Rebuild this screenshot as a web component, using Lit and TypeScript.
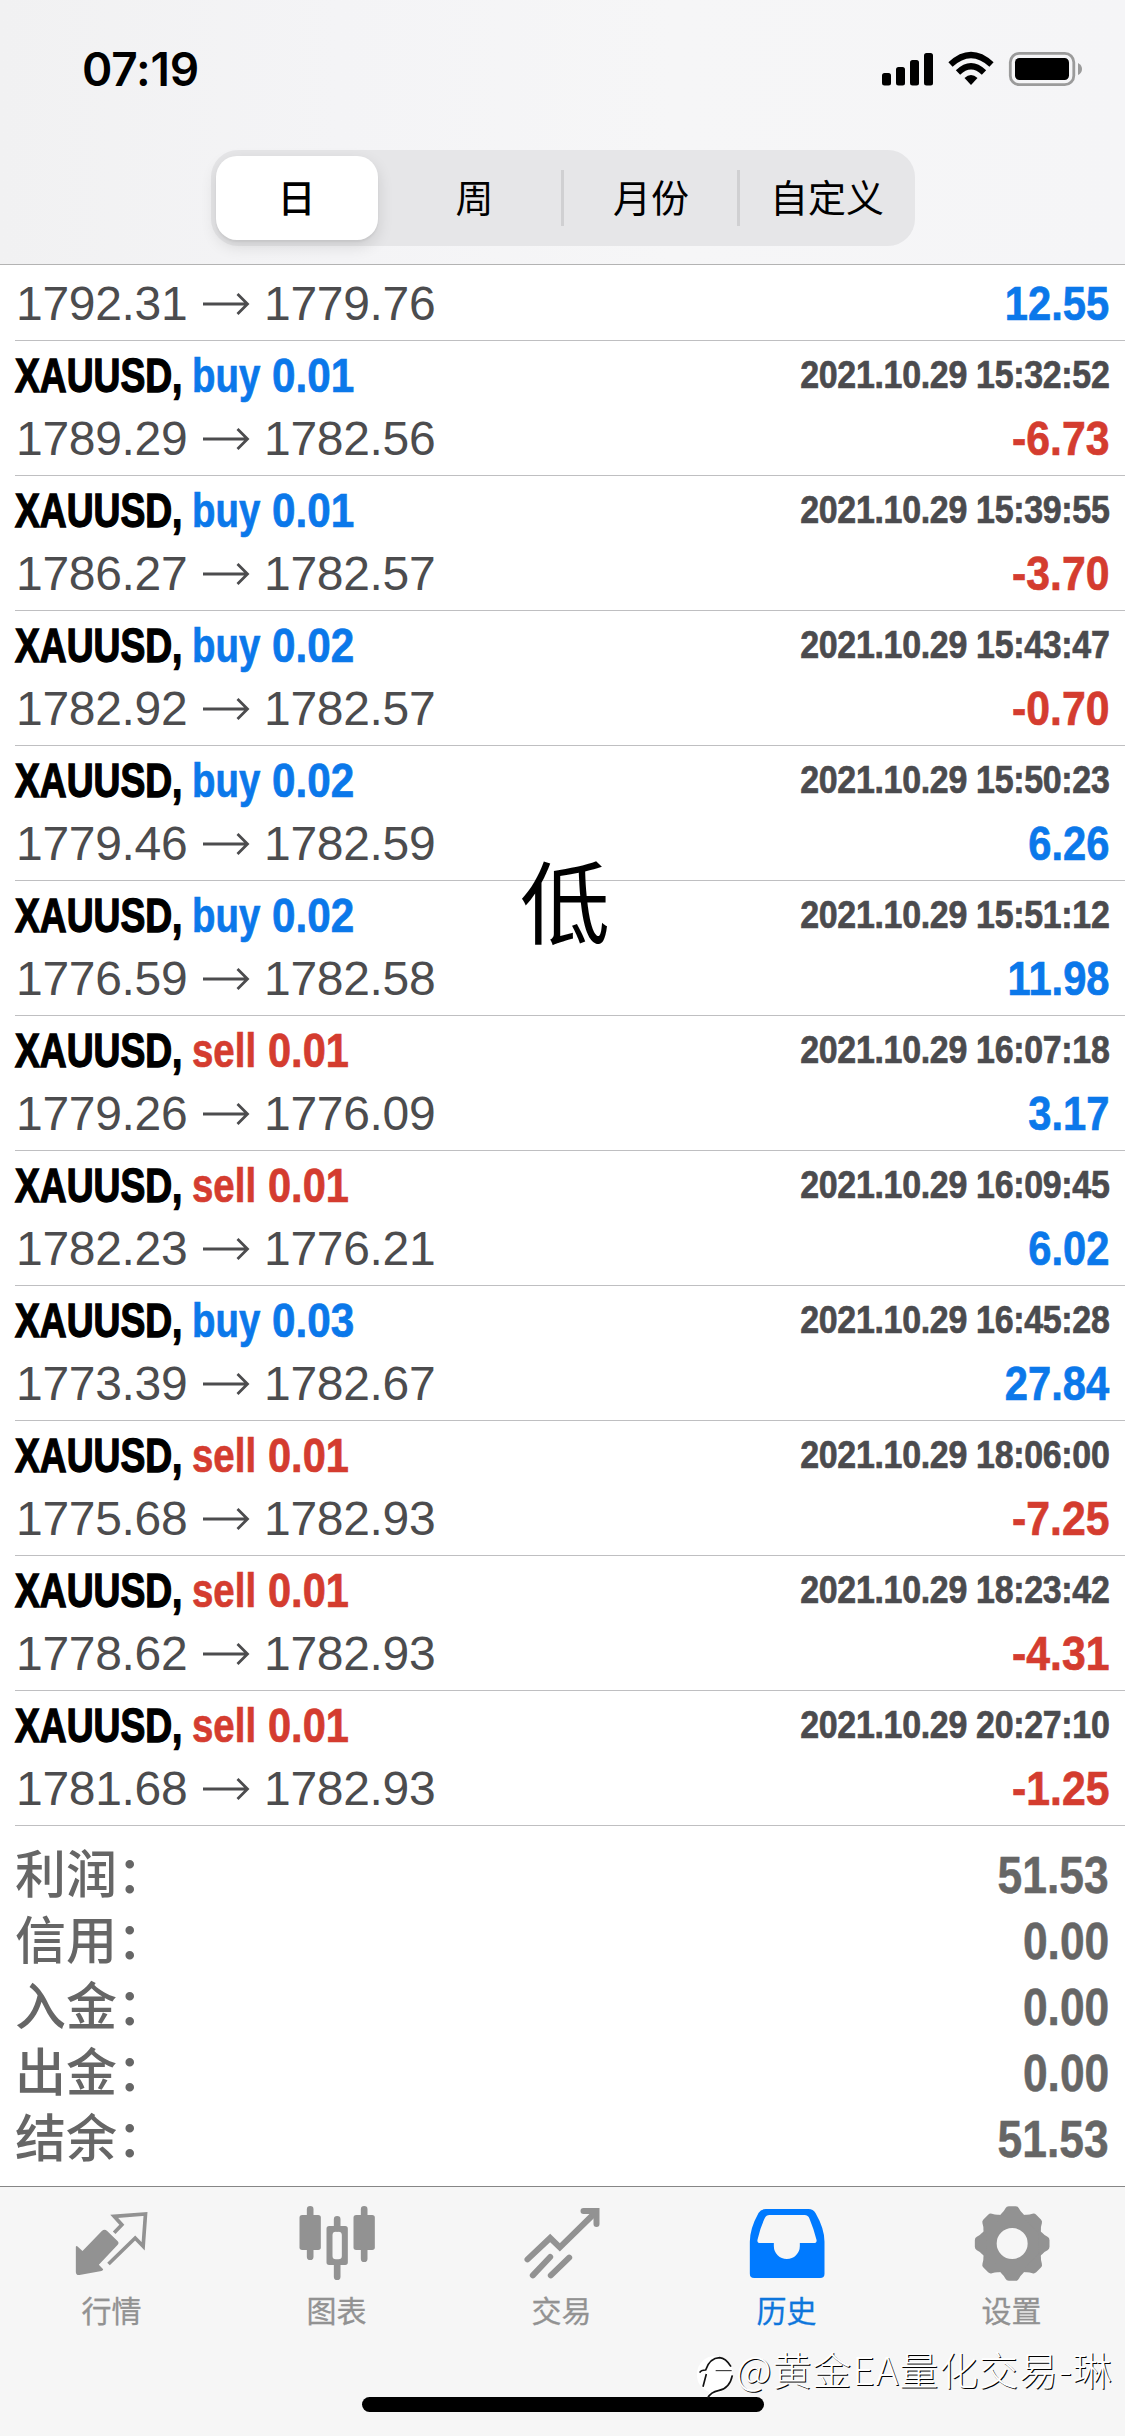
import { LitElement, html, css, svg } from "lit";
import { customElement, property } from "lit/decorators.js";
import { classMap } from "lit/directives/class-map.js";

interface Deal {
  side: "buy" | "sell";
  volume: string;
  open: string;
  close: string;
  time: string;
  profit: string;
}

const deals: Deal[] = [
  ["buy", "0.01", "1789.29", "1782.56", "15:32:52", "-6.73"],
  ["buy", "0.01", "1786.27", "1782.57", "15:39:55", "-3.70"],
  ["buy", "0.02", "1782.92", "1782.57", "15:43:47", "-0.70"],
  ["buy", "0.02", "1779.46", "1782.59", "15:50:23", "6.26"],
  ["buy", "0.02", "1776.59", "1782.58", "15:51:12", "11.98"],
  ["sell", "0.01", "1779.26", "1776.09", "16:07:18", "3.17"],
  ["sell", "0.01", "1782.23", "1776.21", "16:09:45", "6.02"],
  ["buy", "0.03", "1773.39", "1782.67", "16:45:28", "27.84"],
  ["sell", "0.01", "1775.68", "1782.93", "18:06:00", "-7.25"],
  ["sell", "0.01", "1778.62", "1782.93", "18:23:42", "-4.31"],
  ["sell", "0.01", "1781.68", "1782.93", "20:27:10", "-1.25"],
].map(([side, volume, open, close, time, profit]) => ({
  side: side as Deal["side"], volume, open, close, time: `2021.10.29 ${time}`, profit,
}));

const totals = [
  ["利润", "51.53"],
  ["信用", "0.00"],
  ["入金", "0.00"],
  ["出金", "0.00"],
  ["结余", "51.53"],
];

const tooth = "M-42-78L-32-90Q-25-96-20-106Q-17-112-10-112H10Q17-112 20-106Q25-96 32-90L42-78Z";

const tabs = [
  {
    label: "行情",
    icon: svg`<svg viewBox="223.5 75 228 228">
      <path fill="currentColor" d="M304 153Q312 146 320 153L351 183Q357 189 351 195L295 254L308 268Q308 271 303 273L237 285Q226 286 226 275V200Q228 196 232 200L246 213Z"/>
      <path fill="none" stroke="currentColor" stroke-width="11" d="M341 158L364 134L341 109L435 102L428 199L404 174L324 252"/></svg>`,
  },
  {
    label: "图表",
    icon: svg`<svg viewBox="898.5 75 228 228">
      <g fill="none" stroke="currentColor" stroke-width="20" stroke-linecap="round">
        <path d="M929 88V230M1091 88V236M1010 118V145M1010 250V290"/></g>
      <g fill="currentColor"><rect x="897" y="105" width="64" height="105" rx="8"/><rect x="1059" y="105" width="64" height="105" rx="8"/></g>
      <path fill="currentColor" fill-rule="evenodd" d="M986 138H1034Q1042 138 1042 146V247Q1042 255 1034 255H986Q978 255 978 247V146Q978 138 986 138ZM1006 155Q996 155 996 165V228Q996 238 1006 238H1014Q1024 238 1024 228V165Q1024 155 1014 155Z"/></svg>`,
  },
  {
    label: "交易",
    icon: svg`<svg viewBox="223.5 75 228 228">
      <g fill="none" stroke="currentColor" stroke-width="18" stroke-linecap="round">
        <path d="M231 238L299 174L328 202L430 102"/><path stroke-linecap="butt" d="M436 96L424 108"/>
        <path d="M399 93H438V132"/><path d="M247 286L299 231M301 286L356 233"/></g></svg>`,
  },
  {
    label: "历史",
    icon: svg`<svg viewBox="898.5 75 228 228">
      <path fill="currentColor" fill-rule="evenodd" d="M946 87H1074Q1088 87 1095 99Q1122 146 1122 185V281Q1122 294 1109 294H911Q898 294 898 281V185Q898 146 924 99Q931 87 946 87ZM957 105Q947 105 943 114Q930 141 921 179Q919 189 929 189H970V198A39 39 0 0 0 1048 198V189H1090Q1100 189 1098 179Q1090 147 1077 116Q1073 105 1062 105Z"/></svg>`,
  },
  {
    label: "设置",
    icon: svg`<svg viewBox="898.5 75 228 228">
      <g transform="translate(1010 190.500)" fill="currentColor">
        <circle r="69" fill="none" stroke="currentColor" stroke-width="45"/>
        ${[0, 45, 90, 135, 180, 225, 270, 315].map((a) => svg`<path transform="rotate(${a})" d=${tooth}/>`)}
      </g></svg>`,
  },
];

@customElement("status-bar")
class StatusBar extends LitElement {
  static styles = css`
    :host { display: flex; justify-content: space-between; align-items: center; height: 138px; padding: 0 41px 0 82px; box-sizing: border-box; }
    .time { font: 600 46px/60px Inter, sans-serif; color: #000; letter-spacing: -0.2px; }
    .status { display: block; width: 204px; height: 36px; }
  `;
  render() {
    return html`<span class="time">07:19</span>
      <svg class="status" viewBox="880 51 204 36">
        <g fill="#000">
          <rect x="882" y="73" width="9" height="12.500" rx="2.500"/><rect x="896" y="67" width="9" height="18.500" rx="2.500"/>
          <rect x="910" y="60" width="9" height="25.500" rx="2.500"/><rect x="924" y="53" width="9" height="32.500" rx="2.500"/>
          <path d="M971 85L964.500 78Q971 72 977.500 78Z"/>
        </g>
        <g fill="none" stroke="#000" stroke-width="6.200">
          <path d="M950.500 64.500Q971 45.500 991.500 64.500"/><path d="M958 72.500Q971 60 984 72.500"/>
        </g>
        <rect x="1010.300" y="53.300" width="63.500" height="31.400" rx="9" fill="none" stroke="#9b9b9b" stroke-width="2.800"/>
        <rect x="1015" y="58" width="54" height="22" rx="4.500" fill="#000"/>
        <path d="M1078 63Q1082 65 1082 69Q1082 73 1078 75Z" fill="#9b9b9b"/>
      </svg>`;
  }
}

@customElement("period-picker")
class PeriodPicker extends LitElement {
  static styles = css`
    :host { display: grid; grid-template-columns: repeat(4, 1fr); width: 704px; height: 96px; margin: 12px auto 0; border-radius: 27px; background: #e6e6e8; }
    .segment { display: flex; align-items: center; justify-content: center; padding-bottom: 4px; font: 400 38px/56px "Noto Sans CJK SC", sans-serif; color: #000; }
    .segment.divided { border-left: 3px solid #d0d0d2; height: 52px; align-self: center; margin-left: -2px; }
    .segment.active { margin: 6px 9px 6px 5px; background: #fff; border-radius: 21px; font-weight: 500; box-shadow: 0 6px 16px rgba(0, 0, 0, 0.12), 0 2px 2px rgba(0, 0, 0, 0.05); }
  `;
  render() {
    return ["日", "周", "月份", "自定义"].map(
      (t, i) => html`<span class=${classMap({ segment: true, active: i === 0, divided: i > 1 })}>${t}</span>`);
  }
}

@customElement("deal-row")
class DealRow extends LitElement {
  @property({ attribute: false }) deal!: Deal;
  @property({ type: Boolean }) partial = false;
  static styles = css`
    :host { display: block; margin-left: 15px; padding: 3px 16px 5px 0; border-bottom: 1px solid #bfbfc1; box-sizing: content-box; height: 126px; font: 400 48px/63px "Liberation Sans", Arial, sans-serif; }
    :host([partial]) { height: 63px; padding-top: 7px; }
    .line { display: flex; height: 63px; white-space: nowrap; }
    .head, .profit { font-weight: 700; -webkit-text-stroke: 0.7px currentColor; }
    .symbol, .side, .volume { transform-origin: 0 50%; min-width: 0; }
    .symbol { flex: 0 0 177px; color: #000; transform: scaleX(0.775); -webkit-text-stroke-width: 1.4px; }
    .side { transform: scaleX(0.8); }
    .side.buy { flex: 0 0 80px; }
    .side.sell { flex: 0 0 76px; }
    .volume { flex: 0 0 90px; transform: scaleX(0.88); }
    .volume.sell { transform: scaleX(0.865); }
    .buy, .gain { color: #0b78ea; }
    .sell, .loss { color: #d43c2f; }
    .time { margin-left: auto; font-size: 39px; line-height: 62px; color: #4b4b4e; transform: scaleX(0.87); transform-origin: 100% 50%; letter-spacing: -0.35px; }
    .prices { color: #4c4c4e; }
    .price { flex: 0 0 186px; min-width: 0; letter-spacing: -0.3px; }
    .price:first-child { padding-left: 1px; }
    .arrow { width: 48px; height: 24px; margin: 20px 14px 0 0; flex: none; }
    .profit { margin-left: auto; transform: scaleX(0.868); transform-origin: 100% 50%; }
    .profit.loss { transform: scaleX(0.89); }
  `;
  render() {
    const d = this.deal;
    return html`
      ${this.partial ? null : html`<div class="line head">
        <span class="symbol">XAUUSD,</span><span class="side ${d.side}">${d.side}</span>
        <span class="volume ${d.side}">${d.volume}</span><span class="time">${d.time}</span>
      </div>`}
      <div class="line prices">
        <span class="price">${d.open}</span>
        <svg class="arrow" viewBox="0 0 48 24" fill="none" stroke="currentColor" stroke-width="2.800"><path d="M1 12H45M35.500 2L45.500 12L35.500 22"/></svg>
        <span class="price">${d.close}</span>
        <span class="profit ${d.profit.startsWith("-") ? "loss" : "gain"}">${d.profit}</span>
      </div>`;
  }
}

@customElement("tab-bar")
class TabBar extends LitElement {
  static styles = css`
    :host { display: grid; grid-template-columns: repeat(5, 1fr); height: 250px; box-sizing: border-box; border-top: 1px solid #868686; background: #f6f6f6; padding-top: 18px; }
    .tab { display: flex; flex-direction: column; align-items: center; color: #929292; font: 400 30px/40px "Noto Sans CJK SC", sans-serif; }
    .tab.active { color: #007aff; }
    .tab svg { width: 76px; height: 76px; display: block; overflow: visible; }
    .label { margin-top: 8px; padding-right: 2px; -webkit-text-stroke: 0.3px currentColor; }
    .active .label { color: #0e76dc; }
  `;
  render() {
    return tabs.map((t, i) => html`<div class=${classMap({ tab: true, active: i === 3 })}>${t.icon}<span class="label">${t.label}</span></div>`);
  }
}

@customElement("app-root")
class AppRoot extends LitElement {
  static styles = css`
    :host { display: flex; flex-direction: column; position: relative; width: 1125px; height: 2436px; overflow: hidden; background: #fff; }
    .header { height: 264px; flex: none; border-bottom: 1px solid #b3b3b3; background: linear-gradient(90deg, #f1f1f2 0%, #f4f4f6 30%, #f6f6f7 60%, #f5f5f7 100%); }
    .totals { flex: 1; padding: 17px 16px 0 15px; }
    .total { display: flex; justify-content: space-between; height: 66px; color: #666; font: 500 51px/66px "Liberation Sans", "Noto Sans CJK SC", sans-serif; }
    .amount { font-weight: 700; transform: scaleX(0.87); transform-origin: 100% 50%; -webkit-text-stroke: 0.5px currentColor; }
    .note { position: absolute; left: 520px; top: 833px; font: 400 90px/130px "Noto Sans CJK SC", sans-serif; color: #000; }
    .home { position: absolute; left: 362px; top: 2397px; width: 402px; height: 15px; border-radius: 8px; background: #000; }
    .watermark { position: absolute; left: 694px; top: 2344px; display: flex; white-space: nowrap; font: 300 39px/48px "Noto Sans CJK SC", sans-serif; letter-spacing: 0.9px; color: #fff; text-shadow: 1px 1px 0 #000; }
    .logo { width: 42px; height: 56px; }
  `;
  render() {
    return html`
      <div class="header"><status-bar></status-bar><period-picker></period-picker></div>
      <deal-row partial .deal=${{ side: "sell", volume: "", open: "1792.31", close: "1779.76", time: "", profit: "12.55" }}></deal-row>
      ${deals.map((d) => html`<deal-row .deal=${d}></deal-row>`)}
      <div class="totals">
        ${totals.map(([k, v]) => html`<div class="total"><span>${k}：</span><span class="amount">${v}</span></div>`)}
      </div>
      <tab-bar></tab-bar>
      <div class="note">低</div>
      <div class="home"></div>
      <div class="watermark">
        <svg class="logo" viewBox="57 492 126 168">
          <path fill="#fff" d="M66 585A54 54 0 0 1 172 568Q176 630 100 652Q98 640 104 636Q66 622 66 585Z"/>
          <path fill="none" stroke="#111" stroke-width="5" d="M74 578Q78 570 92 570Q104 534 134 533Q152 534 168 560M94 582L84 620M172 586Q164 626 130 632Q108 636 98 654"/>
          <path fill="none" stroke="#222" stroke-width="3" d="M122 572H170"/>
        </svg><span>@黄金EA量化交易-琳</span>
      </div>`;
  }
}
